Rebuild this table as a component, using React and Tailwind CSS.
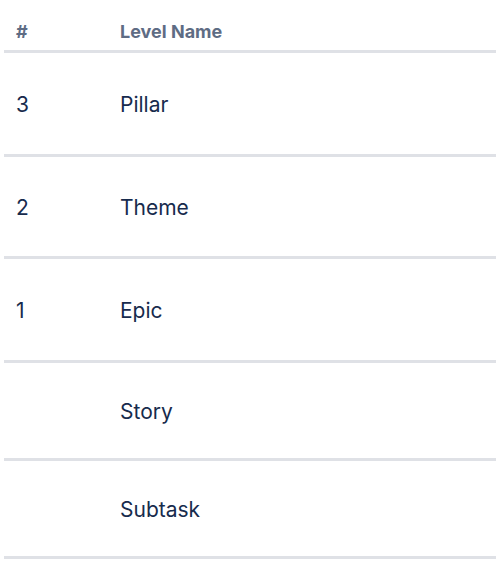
const levels = [
  { num: "3", name: "Pillar", h: "h-[104px]" },
  { num: "2", name: "Theme", h: "h-[102px]" },
  { num: "1", name: "Epic", h: "h-[104px]" },
  { num: "", name: "Story", h: "h-[98px]" },
  { num: "", name: "Subtask", h: "h-[98px]" },
];

export default function App() {
  return (
    <div className="min-h-screen bg-white pl-1 font-['Inter',sans-serif] text-[#172b4d]">
      <table className="w-full border-collapse">
        <thead>
          <tr className="h-[51px] border-b-[3px] border-[#dfe1e6] text-left text-[18px] font-bold text-[#5e6c84]">
            <th className="w-[104px] px-3 pb-[5px] align-bottom">#</th>
            <th className="px-3 pb-[5px] align-bottom">Level Name</th>
          </tr>
        </thead>
        <tbody>
          {levels.map((level, index) => (
            <tr key={index} className={`${level.h} border-b-[3px] border-[#dfe1e6] text-[21px]`}>
              <td className="px-3 pt-1 align-middle">{level.num}</td>
              <td className="px-3 pt-1 align-middle">{level.name}</td>
            </tr>
          ))}
        </tbody>
      </table>
    </div>
  );
}
